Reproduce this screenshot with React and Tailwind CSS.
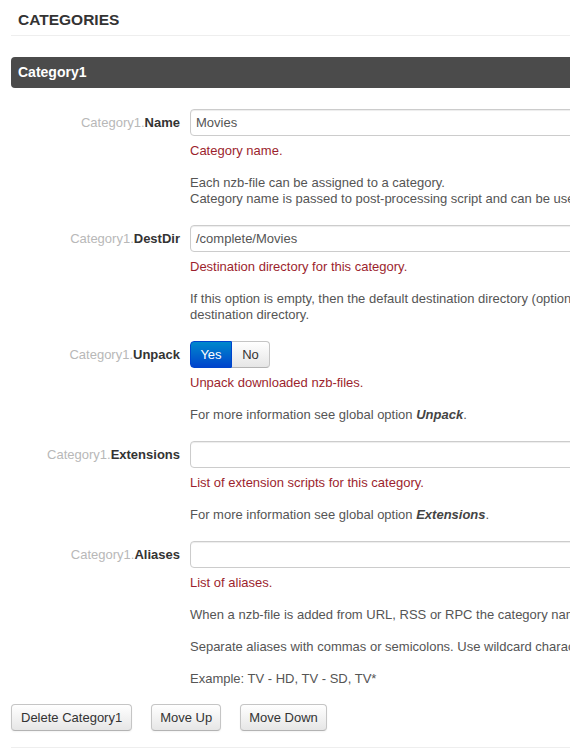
import React from 'react'

const btn =
  "h-[27px] border border-[#c5c5c5] border-b-[#b3b3b3] rounded-[4px] bg-[linear-gradient(to_bottom,#ffffff,#e6e6e6)] shadow-[inset_0_1px_0_rgba(255,255,255,0.2),0_1px_2px_rgba(0,0,0,0.05)] text-[13px] text-[#333] leading-none"

function Label({ name }) {
  return (
    <div className="w-[169px] h-[27px] flex items-center justify-end shrink-0 text-[13px]">
      <span className="text-[#b8b8b8]">Category1.</span>
      <span className="font-bold text-[#333]">{name}</span>
    </div>
  )
}

function TextInput({ value }) {
  return (
    <div className="w-[520px] h-[27px] flex items-center border border-[#cccccc] rounded-[4px] px-[5px] shadow-[inset_0_1px_1px_rgba(0,0,0,0.075)] text-[13px] text-[#555]">
      {value}
    </div>
  )
}

function Group({ name, children, control, last }) {
  return (
    <div className={`flex ${last ? 'mb-[17px]' : 'mb-[18px]'}`}>
      <Label name={name} />
      <div className="ml-[10px] flex-1">
        {control}
        {children}
      </div>
    </div>
  )
}

function Help({ children }) {
  return <div className="mt-[7px] leading-4 text-[13px] text-[#9c1f2e] whitespace-nowrap">{children}</div>
}

function P({ children }) {
  return <div className="mt-4 leading-4 text-[13px] text-[#555] whitespace-nowrap">{children}</div>
}

export default function App() {
  return (
    <div className="w-[570px] h-[750px] overflow-hidden bg-white font-['Liberation_Sans',Arial,sans-serif]">
      <div className="w-[760px] pl-[11px]">
        <div className="border-b border-[#eeeeee] pl-[7px] pt-[11px] pb-[6px]">
          <h2 className="text-[15.5px] leading-[18px] font-bold text-[#333]">CATEGORIES</h2>
        </div>

        <div className="mt-[21px] h-[31px] flex items-center px-[7px] bg-[#4b4b4b] rounded-[4px] text-[14px] font-bold text-white">
          Category1
        </div>

        <div className="mt-[21px]">
          <Group name="Name" control={<TextInput value="Movies" />}>
            <Help>Category name.</Help>
            <P>
              Each nzb-file can be assigned to a category.
              <br />
              Category name is passed to post-processing script and can be used by it to perform category specific processing.
            </P>
          </Group>

          <Group name="DestDir" control={<TextInput value="/complete/Movies" />}>
            <Help>Destination directory for this category.</Help>
            <P>
              If this option is empty, then the default destination directory (option DestDir) is used. In this case if option AppendCategoryDir is active, the program creates a subdirectory with category name within
              <br />
              destination directory.
            </P>
          </Group>

          <Group
            name="Unpack"
            control={
              <div className="flex h-[27px] text-[13px]">
                <button className="w-[42px] h-[27px] rounded-l-[4px] border border-[#0044cc] bg-[linear-gradient(to_bottom,#0088cc,#0044cc)] text-white">
                  Yes
                </button>
                <button className="w-[38px] h-[27px] rounded-r-[4px] border border-l-0 border-[#c5c5c5] border-b-[#b3b3b3] bg-[linear-gradient(to_bottom,#ffffff,#e6e6e6)] text-[#333]">
                  No
                </button>
              </div>
            }
          >
            <Help>Unpack downloaded nzb-files.</Help>
            <P>
              For more information see global option <b className="italic text-[#444]">Unpack</b>.
            </P>
          </Group>

          <Group name="Extensions" control={<TextInput value="" />}>
            <Help>List of extension scripts for this category.</Help>
            <P>
              For more information see global option <b className="italic text-[#444]">Extensions</b>.
            </P>
          </Group>

          <Group name="Aliases" control={<TextInput value="" />} last>
            <Help>List of aliases.</Help>
            <P>When a nzb-file is added from URL, RSS or RPC the category name is checked against all aliases to find a matching category.</P>
            <P>Separate aliases with commas or semicolons. Use wildcard characters * and ?.</P>
            <P>Example: TV - HD, TV - SD, TV*</P>
          </Group>
        </div>

        <div className="flex gap-[19px]">
          <button className={`${btn} px-[9px]`}>Delete Category1</button>
          <button className={`${btn} px-[8px]`}>Move Up</button>
          <button className={`${btn} px-[8px]`}>Move Down</button>
        </div>

        <div className="mt-4 border-t border-[#eeeeee]" />
      </div>
    </div>
  )
}
